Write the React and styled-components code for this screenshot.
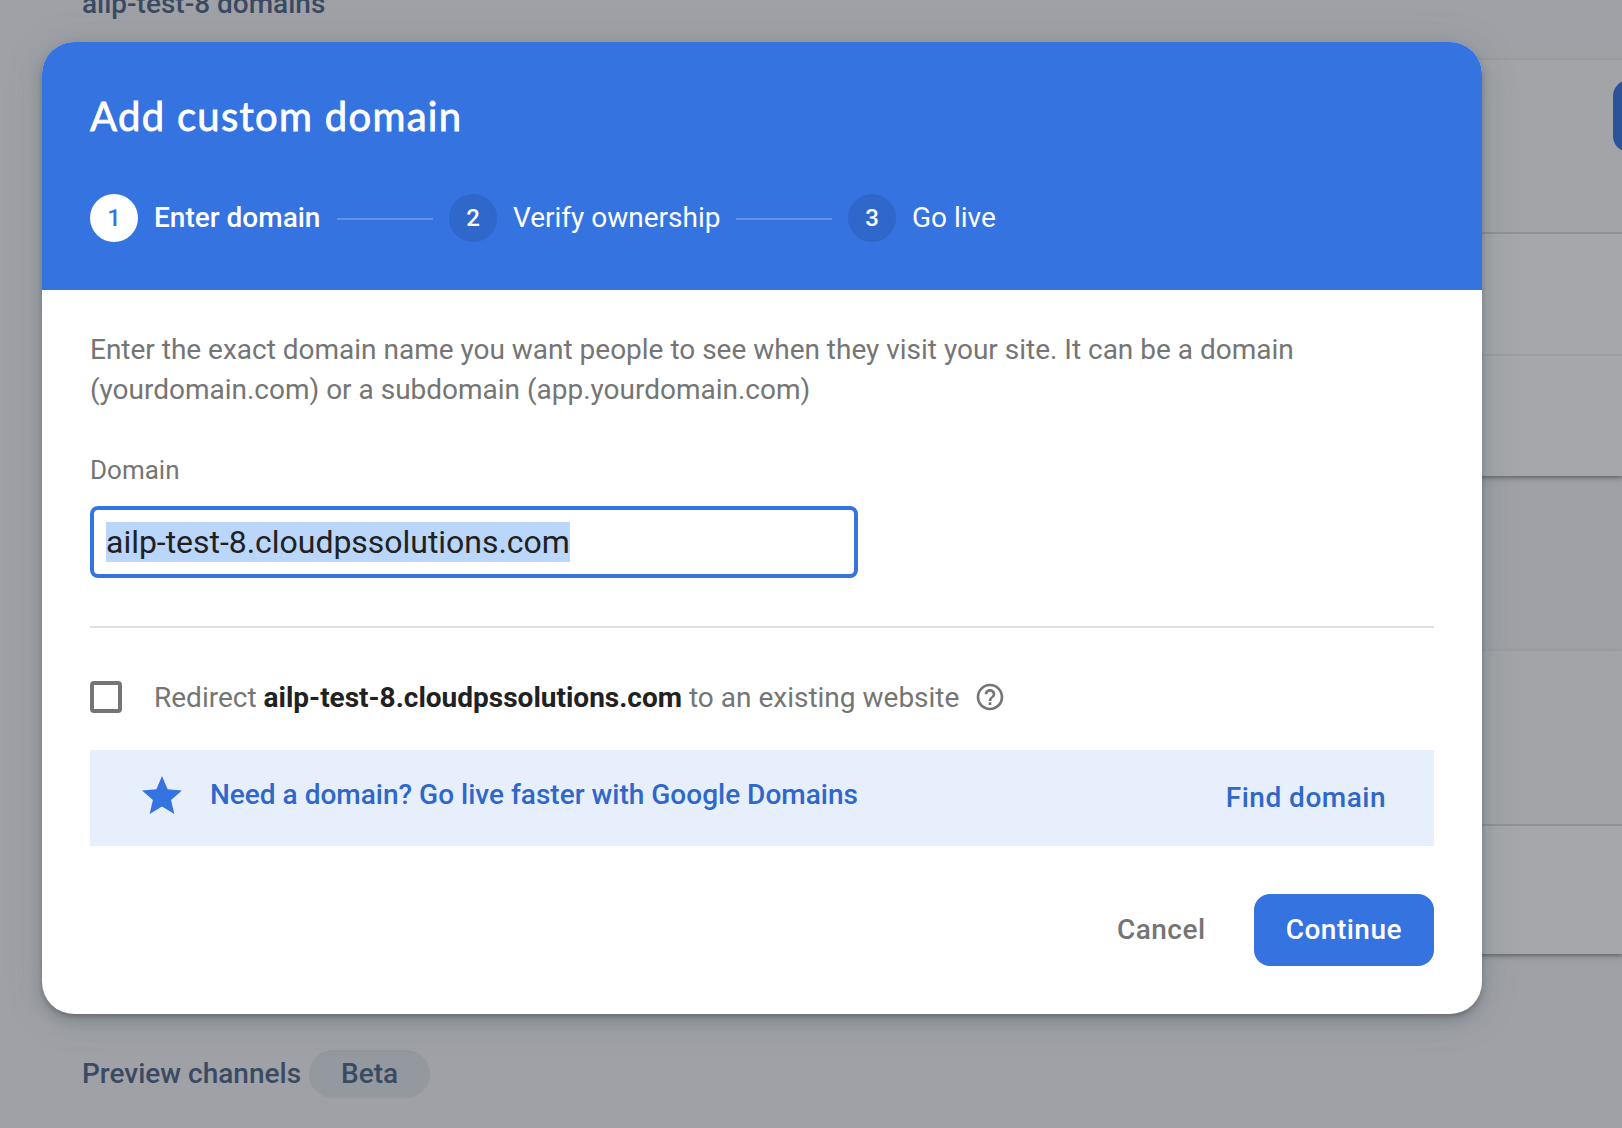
import React from "react";
import styled, { createGlobalStyle } from "styled-components";

const Global = createGlobalStyle`
  *, *::before, *::after { box-sizing: border-box; }
  body { margin: 0; background: #9fa1a6; font-family: Roboto, "Liberation Sans", sans-serif; }
  p, h1, h2 { margin: 0; }
`;

const Screen = styled.div`
  position: relative;
  width: 1622px;
  height: 1128px;
  overflow: hidden;
  background: #9fa1a6;
`;

const Page = styled.div`
  display: flex;
  flex-direction: column;
  height: 1128px;
  padding-left: 82px;
`;

const SectionTitle = styled.h2`
  display: flex;
  align-items: center;
  gap: 8px;
  height: ${(p) => p.$height}px;
  margin-top: ${(p) => p.$top || 0}px;
  font-size: 28px;
  font-weight: 500;
  line-height: 40px;
  white-space: nowrap;
  color: #3a4a62;
`;

const Beta = styled.span`
  height: 48px;
  padding: 0 32px;
  border-radius: 24px;
  line-height: 47px;
  background: #93999f;
`;

const Card = styled.section`
  margin-top: ${(p) => p.$top}px;
  background: #a5a7aa;
  box-shadow: 0 2px 3px rgba(40, 44, 50, 0.4), 0 3px 8px rgba(40, 44, 50, 0.12);
`;

const CardHeader = styled.div`
  display: flex;
  align-items: flex-start;
  height: ${(p) => p.$height}px;
  padding: 20px 0 0 1531px;
  border-bottom: 2px solid #8f9195;
  background: #a2a4a7;
`;

const PageButton = styled.div`
  flex: none;
  width: 220px;
  height: 72px;
  border-radius: 16px;
  background: #2a5298;
`;

const CardRow = styled.div`
  height: ${(p) => p.$height}px;
  & + & { border-top: 2px solid #9c9ea1; }
`;

const Dialog = styled.main`
  position: absolute;
  top: 42px;
  left: 42px;
  width: 1440px;
  height: 972px;
  border-radius: 32px;
  overflow: hidden;
  background: #fff;
  box-shadow: 0 3px 5px -1px rgba(0, 0, 0, 0.2), 0 6px 12px rgba(50, 60, 70, 0.2), 0 4px 36px rgba(70, 85, 95, 0.22);
`;

const Header = styled.header`
  height: 248px;
  padding: 46px 48px 0;
  color: #fff;
  background: #3573e1;
`;

const Title = styled.h1`
  font-family: Lato, sans-serif;
  font-size: 40px;
  font-weight: 400;
  line-height: 56px;
  letter-spacing: 1.3px;
  -webkit-text-stroke: 0.8px #fff;
`;

const Steps = styled.div`
  display: flex;
  align-items: center;
  gap: 16px;
  margin-top: 50px;
`;

const StepNumber = styled.span`
  display: flex;
  align-items: center;
  justify-content: center;
  width: 48px;
  height: 48px;
  border-radius: 50%;
  font-size: 24px;
  font-weight: 500;
  color: ${(p) => (p.$active ? "#3573e1" : "#fff")};
  background: ${(p) => (p.$active ? "#fff" : "#2f67ca")};
`;

const StepLabel = styled.span`
  width: ${(p) => p.$width}px;
  font-size: 28px;
  font-weight: ${(p) => (p.$active ? 500 : 400)};
  line-height: 40px;
  white-space: nowrap;
`;

const StepLine = styled.span`
  width: 96px;
  height: 2px;
  margin-top: 2px;
  background: #6292e8;
`;

const Body = styled.div`
  display: flex;
  flex-direction: column;
  padding: 40px 48px 0;
  color: #757575;
`;

const Intro = styled.p`
  font-size: 28px;
  line-height: 40px;
  letter-spacing: -0.01px;
  white-space: nowrap;
`;

const FieldLabel = styled.label`
  margin-top: 44px;
  font-size: 26px;
  line-height: 32px;
`;

const Field = styled.div`
  display: flex;
  align-items: center;
  width: 768px;
  height: 72px;
  margin-top: 20px;
  padding: 0 12px;
  border: 4px solid #3573e1;
  border-radius: 8px;
`;

const Selection = styled.span`
  height: 40px;
  font-size: 32px;
  line-height: 40px;
  letter-spacing: -0.03px;
  color: #212121;
  background: #bbd6fb;
`;

const Divider = styled.div`
  height: 2px;
  margin-top: 48px;
  background: #e0e0e0;
`;

const Redirect = styled.div`
  display: flex;
  align-items: center;
  height: 40px;
  margin-top: 49px;
`;

const Checkbox = styled.span`
  width: 32px;
  height: 32px;
  border: 4px solid #757575;
  border-radius: 4px;
`;

const RedirectText = styled.span`
  width: 804px;
  margin: 1px 16px 0 32px;
  font-size: 28px;
  line-height: 40px;
  white-space: nowrap;
  b { font-weight: 700; color: #212121; }
`;

const Banner = styled.div`
  display: flex;
  align-items: center;
  height: 96px;
  margin-top: 33px;
  padding: 0 48px;
  font-size: 28px;
  font-weight: 500;
  line-height: 40px;
  color: #2f67ca;
  background: #e8effc;
`;

const Star = styled.svg`
  width: 48px;
  height: 48px;
  margin-bottom: 4px;
  fill: #3573e1;
`;

const BannerText = styled.span`
  flex: 1;
  margin: 0 0 6px 24px;
`;

const Actions = styled.div`
  display: flex;
  justify-content: flex-end;
  align-items: center;
  gap: 16px;
  margin-top: 48px;
`;

const Button = styled.button`
  height: 72px;
  padding: 0 32px;
  border: 0;
  border-radius: 16px;
  font: 500 28px/40px Roboto, sans-serif;
  letter-spacing: 0.5px;
  color: ${(p) => (p.$primary ? "#fff" : "#757575")};
  background: ${(p) => (p.$primary ? "#3573e1" : "transparent")};
`;

const LinkText = styled.span`
  letter-spacing: 0.5px;
`;

const StarIcon = () => (
  <Star viewBox="0 0 24 24">
    <path d="M12 17.27 18.18 21l-1.64-7.03L22 9.24l-7.19-.61L12 2 9.19 8.63 2 9.24l5.46 4.73L5.82 21z" />
  </Star>
);

const HelpIcon = () => (
  <svg width="32" height="32" viewBox="0 0 24 24" fill="#757575">
    <path d="M11 18h2v-2h-2v2zm1-16C6.48 2 2 6.48 2 12s4.48 10 10 10 10-4.48 10-10S17.52 2 12 2zm0 18c-4.41 0-8-3.59-8-8s3.59-8 8-8 8 3.59 8 8-3.59 8-8 8zm0-14c-2.21 0-4 1.79-4 4h2c0-1.1.9-2 2-2s2 .9 2 2c0 2-3 1.75-3 5h2c0-2.25 3-2.5 3-5 0-2.21-1.79-4-4-4z" />
  </svg>
);

export default function App() {
  return (
    <Screen>
      <Global />
      <Page>
        <SectionTitle $height={7}>
          <span>ailp-test-8 domains</span>
        </SectionTitle>
        <Card $top={53}>
          <CardHeader $height={174}><PageButton /></CardHeader>
          <CardRow $height={120} />
          <CardRow $height={122} />
        </Card>
        <Card $top={175}>
          <CardHeader $height={175} />
          <CardRow $height={128} />
        </Card>
        <SectionTitle $height={48} $top={96}>
          <span>Preview channels</span>
          <Beta>Beta</Beta>
        </SectionTitle>
      </Page>
      <Dialog>
        <Header>
          <Title>Add custom domain</Title>
          <Steps>
            <StepNumber $active>1</StepNumber>
            <StepLabel $active $width={167}>Enter domain</StepLabel>
            <StepLine />
            <StepNumber>2</StepNumber>
            <StepLabel $width={207}>Verify ownership</StepLabel>
            <StepLine />
            <StepNumber>3</StepNumber>
            <StepLabel>Go live</StepLabel>
          </Steps>
        </Header>
        <Body>
          <Intro>
            Enter the exact domain name you want people to see when they visit your site. It can be a domain
            <br />
            (yourdomain.com) or a subdomain (app.yourdomain.com)
          </Intro>
          <FieldLabel>Domain</FieldLabel>
          <Field><Selection>ailp-test-8.cloudpssolutions.com</Selection></Field>
          <Divider />
          <Redirect>
            <Checkbox />
            <RedirectText>Redirect <b>ailp-test-8.cloudpssolutions.com</b> to an existing website</RedirectText>
            <HelpIcon />
          </Redirect>
          <Banner>
            <StarIcon />
            <BannerText>Need a domain? Go live faster with Google Domains</BannerText>
            <LinkText>Find domain</LinkText>
          </Banner>
          <Actions>
            <Button>Cancel</Button>
            <Button $primary>Continue</Button>
          </Actions>
        </Body>
      </Dialog>
    </Screen>
  );
}
